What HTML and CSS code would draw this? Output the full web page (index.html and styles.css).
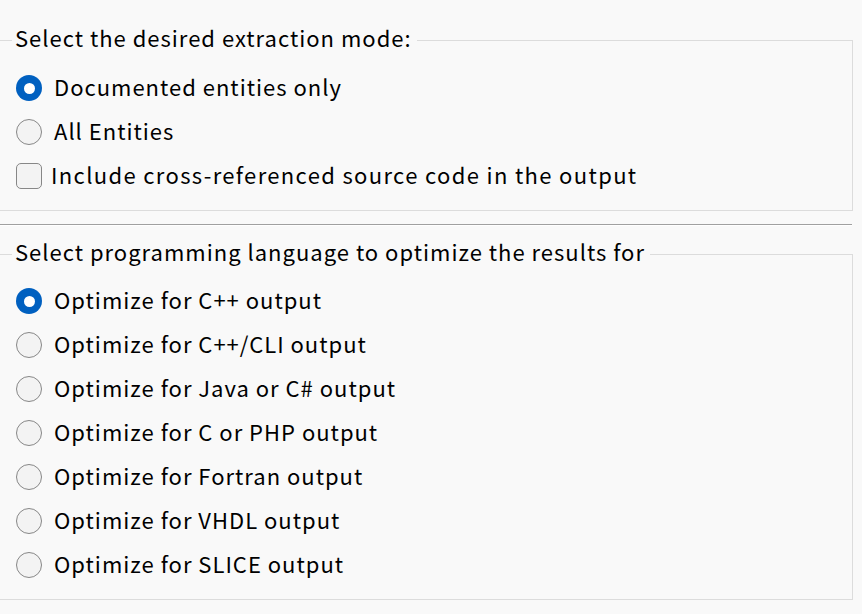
FILE: index.html
```html
<!DOCTYPE html>
<html>
<head>
<meta charset="utf-8">
<link rel="stylesheet" href="styles.css">
</head>
<body>
<fieldset class="group group-mode">
  <legend class="group-title"><span class="title-text">Select the desired extraction mode:</span></legend>
  <div class="option"><span class="radio checked"></span><span class="label">Documented entities only</span></div>
  <div class="option"><span class="radio"></span><span class="label">All Entities</span></div>
  <div class="option"><span class="check"></span><span class="label label-check">Include cross-referenced source code in the output</span></div>
</fieldset>
<div class="separator"></div>
<fieldset class="group group-lang">
  <legend class="group-title"><span class="title-text">Select programming language to optimize the results for</span></legend>
  <div class="option"><span class="radio checked"></span><span class="label">Optimize for C++ output</span></div>
  <div class="option"><span class="radio"></span><span class="label">Optimize for C++/CLI output</span></div>
  <div class="option"><span class="radio"></span><span class="label">Optimize for Java or C# output</span></div>
  <div class="option"><span class="radio"></span><span class="label">Optimize for C or PHP output</span></div>
  <div class="option"><span class="radio"></span><span class="label">Optimize for Fortran output</span></div>
  <div class="option"><span class="radio"></span><span class="label">Optimize for VHDL output</span></div>
  <div class="option"><span class="radio"></span><span class="label">Optimize for SLICE output</span></div>
</fieldset>
</body>
</html>
```
FILE: styles.css
```css
html, body {
  margin: 0;
  padding: 0;
  background: #f9f9f9;
}
body {
  width: 862px;
  height: 614px;
  overflow: hidden;
  font-family: "Noto Sans CJK KR", "Noto Sans", sans-serif;
  font-size: 22px;
  letter-spacing: 1px;
  color: #000;
}
.group {
  margin: 0 0 0 -1px;
  width: 854px;
  box-sizing: border-box;
  border: 1px solid #dcdcdc;
  padding: 11px 0 12px 16px;
  min-width: 0;
}
.group-mode {
  margin-top: 25px;
}
.group-lang {
  margin-top: 13px;
  padding-top: 10px;
  padding-bottom: 12px;
}
.group-title {
  margin-left: -4px;
  padding: 0 5px 0 3px;
  height: 30px;
  white-space: nowrap;
}
.title-text {
  display: block;
  height: 30px;
  line-height: 25px;
}
.option {
  display: flex;
  align-items: center;
  height: 44px;
}
.label {
  margin-left: 12px;
  line-height: 40px;
  margin-bottom: 4px;
  white-space: nowrap;
}
.label-check {
  margin-left: 9px;
  letter-spacing: 1.35px;
}
.radio {
  flex: none;
  width: 26px;
  height: 26px;
  box-sizing: border-box;
  border-radius: 50%;
  border: 1.5px solid #878787;
  background: #f3f3f3;
  display: flex;
  align-items: center;
  justify-content: center;
}
.radio.checked {
  border: none;
  background: #0060c0;
}
.radio.checked::after {
  content: "";
  width: 11px;
  height: 11px;
  border-radius: 50%;
  background: #fff;
}
.check {
  flex: none;
  width: 26px;
  height: 26px;
  box-sizing: border-box;
  border-radius: 5px;
  border: 1.5px solid #878787;
  background: #f3f3f3;
}
.separator {
  margin-top: 13px;
  width: 852px;
  height: 1px;
  background: #a0a0a0;
  border-bottom: 1px solid #ffffff;
}
```
